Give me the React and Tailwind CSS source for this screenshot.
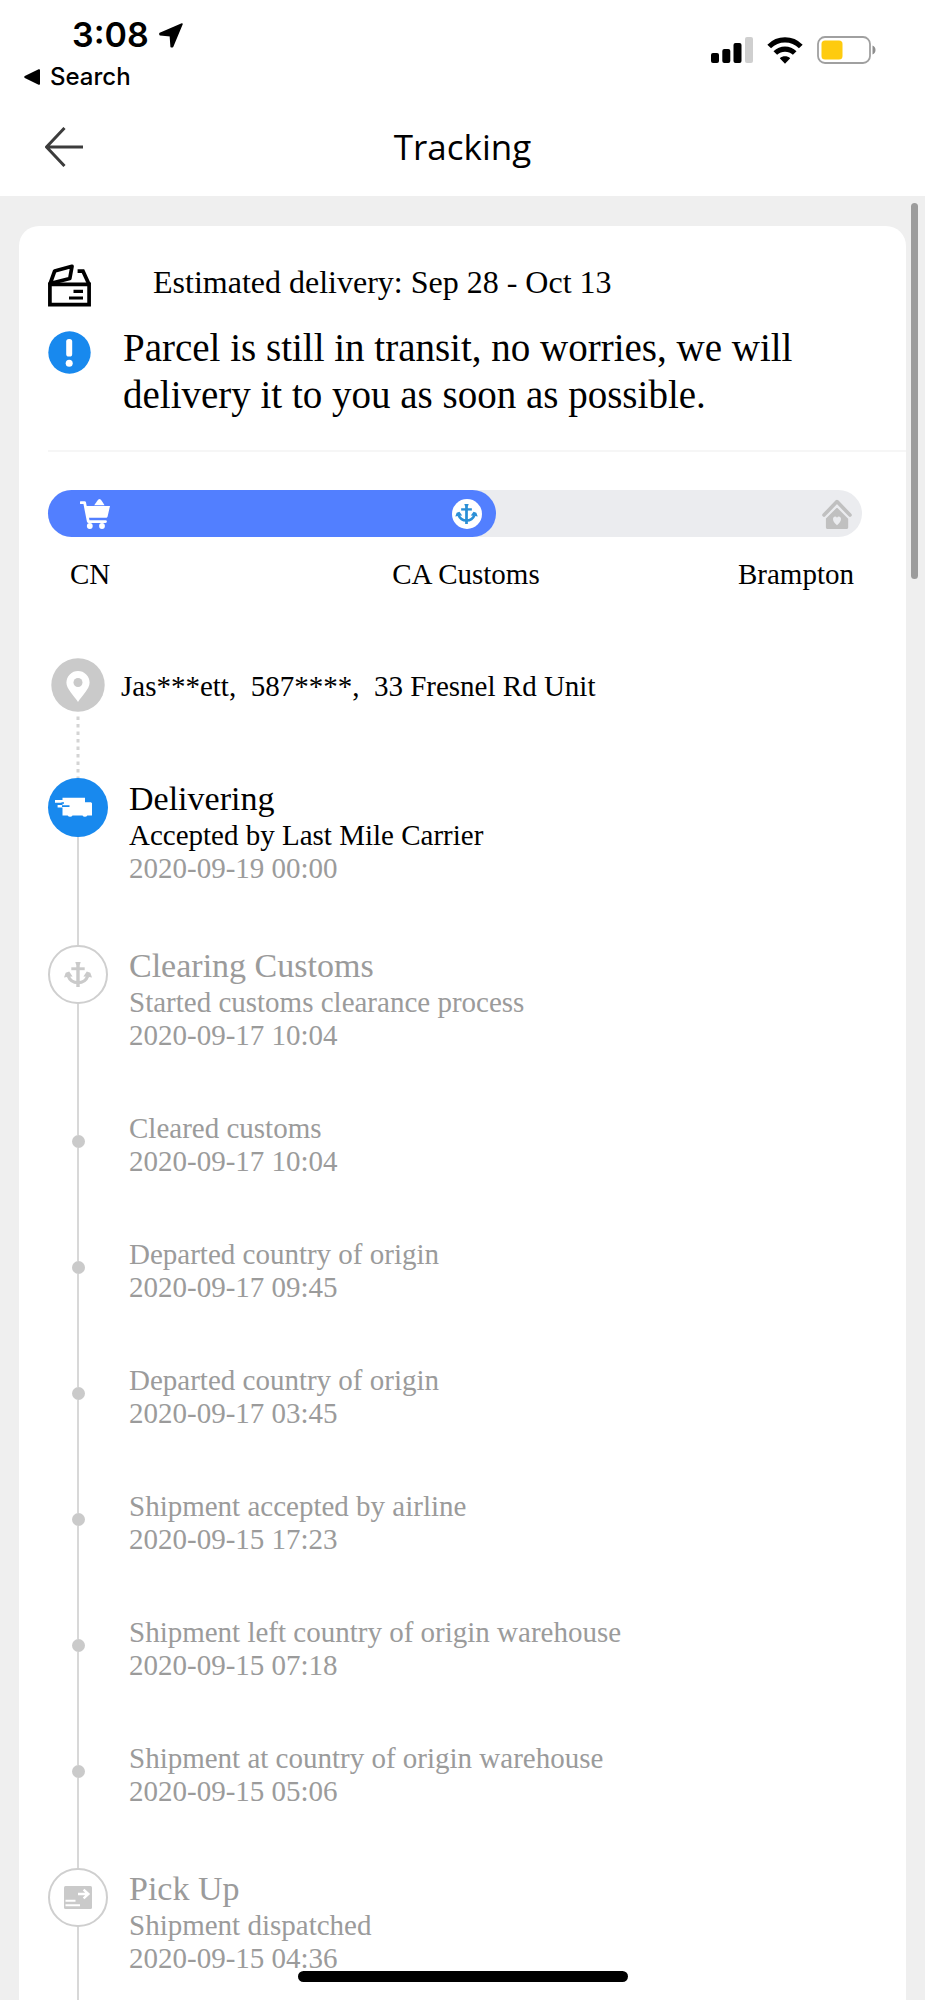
import clsx from "clsx";

const events = [
  { type: "delivering", title: "Delivering", text: "Accepted by Last Mile Carrier", date: "2020-09-19 00:00", active: true },
  { type: "customs", title: "Clearing Customs", text: "Started customs clearance process", date: "2020-09-17 10:04" },
  { type: "dot", text: "Cleared customs", date: "2020-09-17 10:04" },
  { type: "dot", text: "Departed country of origin", date: "2020-09-17 09:45" },
  { type: "dot", text: "Departed country of origin", date: "2020-09-17 03:45" },
  { type: "dot", text: "Shipment accepted by airline", date: "2020-09-15 17:23" },
  { type: "dot", text: "Shipment left country of origin warehouse", date: "2020-09-15 07:18" },
  { type: "dot", text: "Shipment at country of origin warehouse", date: "2020-09-15 05:06" },
  { type: "pickup", title: "Pick Up", text: "Shipment dispatched", date: "2020-09-15 04:36" },
];

function AnchorIcon({ className }) {
  return (
    <svg viewBox="0 0 28 25" className={className} fill="currentColor">
      <path d="M11.300 0h5.400l-1 3.200V25h-3.400V3.200z" />
      <path d="M7.300 5.300h13.400v2.900H7.300z" />
      <path d="M4.200 14C6 19 9.800 20.600 14 20.600S22 19 23.800 14" fill="none" stroke="currentColor" strokeWidth="3.200" />
      <path d="M0 15.600L1.700 10.800 5.200 9.600 8.600 14.400 4.500 14.800z" />
      <path d="M28 15.600L26.300 10.800 22.800 9.600 19.400 14.400 23.500 14.800z" />
    </svg>
  );
}

function CartIcon() {
  return (
    <svg viewBox="0 0 30 30" className="h-[30px] w-[30px]" fill="currentColor">
      <path d="M14.200 6.300L17 2.200C18 .8 18.800.1 19.500.1s1.500.7 2.500 2.100l2.500 4.100z" />
      <path d="M4.500 7H30L27.600 17.400c-.2.900-.8 1.300-1.700 1.300H7.500z" />
      <path d="M1 3.600H4.600L8.300 22.600H25.500" fill="none" stroke="currentColor" strokeWidth="2.800" strokeLinecap="round" strokeLinejoin="round" />
      <circle cx="9.800" cy="27" r="2.900" />
      <circle cx="22" cy="27" r="2.900" />
    </svg>
  );
}

function HouseIcon() {
  return (
    <svg viewBox="0 0 30 30" className="h-[30px] w-[30px]" fill="currentColor">
      <path d="M2 16L15 2.600 28 16" fill="none" stroke="currentColor" strokeWidth="3.600" strokeLinejoin="round" strokeLinecap="round" />
      <path d="M14 9.400c.6-.6 1.400-.6 2 0l10.200 10.300V28.200c0 1-.7 1.800-1.700 1.800H5.600c-1 0-1.700-.8-1.700-1.800V19.500z" />
      <path d="M15 26.200c-2.300-1.800-4-3.900-4-6.100 0-2.900 2.900-3.400 4-1.400 1.100-2 4-1.500 4 1.400 0 2.200-1.700 4.300-4 6.100z" className="fill-[#ebecef]" />
    </svg>
  );
}

function TruckIcon() {
  return (
    <svg viewBox="0 0 38 21" className="mr-2 h-[21px] w-[38px]" fill="currentColor">
      <path d="M7.500.700H30V5.300H36L37 6.300V18.500H32.300a2.600 2 0 0 1-4.800 0H17.500a2.600 2 0 0 1-4.800 0H7.500z" />
      <path d="M0 2.900h9v2.800H0zM2.600 8h6v2.600h-6z" />
      <path d="M6.500 5.300h2.500v1.500h-2.500zM7 8.300h7.500v1.600H7z" className="fill-[#1889ee]" />
    </svg>
  );
}

function PickupIcon() {
  return (
    <svg viewBox="0 0 28 23" className="h-[23px] w-[28px]">
      <rect width="28" height="23" rx="1.500" className="fill-[#cacaca]" />
      <path d="M14 8h9.500M19.600 3.600L24.400 8l-4.800 4.400" fill="none" stroke="white" strokeWidth="2.400" />
      <path d="M1.500 14.800h10M1.500 19.300h14.500" stroke="white" strokeWidth="1.900" />
    </svg>
  );
}

function BoxIcon() {
  return (
    <svg viewBox="0 0 43 43" className="h-[43px] w-[43px] shrink-0" fill="none" stroke="black" strokeWidth="3.700">
      <path d="M1.900 20.300H41.100V40.700H1.900z" />
      <path d="M2.200 19.500L6.700 7 24 2.300 21.800 14.500z" strokeLinejoin="round" />
      <path d="M29.600 7.200H35l6 13" />
      <path d="M25.500 27.300H35M21 34H35" strokeWidth="3.200" />
    </svg>
  );
}

function AlertIcon() {
  return (
    <svg viewBox="0 0 43 43" className="mt-[7px] h-[43px] w-[43px] shrink-0">
      <circle cx="21.500" cy="21.500" r="21.200" className="fill-[#1889ee]" />
      <rect x="18.200" y="8" width="6" height="17.500" rx="2.600" fill="white" />
      <circle cx="21.200" cy="32.200" r="3.500" fill="white" />
    </svg>
  );
}

function PinBadge() {
  return (
    <svg viewBox="0 0 54 54" className="h-[54px] w-[54px]">
      <circle cx="27" cy="27" r="26.700" className="fill-[#cacaca]" />
      <path d="M27 44C23 38 15.400 31 15.400 24.600a11.600 11.600 0 0 1 23.200 0C38.600 31 31 38 27 44z" fill="white" />
      <circle cx="27" cy="24.500" r="4.500" className="fill-[#cacaca]" />
    </svg>
  );
}

function StatusBar() {
  return (
    <div className="flex h-[98px] justify-between pl-6 pr-[49px] pt-[15px] font-['Inter',sans-serif] text-black">
      <div>
        <div className="flex items-center gap-[10px] pl-12 text-[34px] font-semibold leading-10">
          3:08
          <svg viewBox="0 0 24 25" className="h-[25px] w-6" fill="currentColor" stroke="currentColor" strokeWidth="1.600" strokeLinejoin="round">
            <path d="M23 1L13.500 23.800H12.200L11.400 12.800 1 11.600V10.400z" />
          </svg>
        </div>
        <a href="#search" className="mt-2 flex items-center gap-[10px] text-2xl font-medium leading-7">
          <svg viewBox="0 0 16 16" className="h-4 w-4" fill="currentColor">
            <path d="M14.600.300c.8-.4 1.400.1 1.400 1v13.400c0 .9-.6 1.400-1.400 1L.800 9C0 8.600 0 7.500.800 7z" />
          </svg>
          Search
        </a>
      </div>
      <div className="mt-[21px] flex h-7 items-center">
        <svg viewBox="0 0 42 26" className="mr-[14px] h-[26px] w-[42px]">
          <rect x="0" y="16" width="8" height="10" rx="2" />
          <rect x="11.300" y="12" width="8" height="14" rx="2" />
          <rect x="22.500" y="6" width="8" height="20" rx="2" />
          <rect x="34" y="0" width="8" height="26" rx="2" className="fill-[#cfcfcf]" />
        </svg>
        <svg viewBox="0 0 36 27" className="mr-[14px] h-[27px] w-9">
          <path d="M2.200 9.500C11 .600 25 .600 33.800 9.500M8.300 16c5.500-5.300 13.900-5.300 19.400 0" fill="none" stroke="black" strokeWidth="5.200" />
          <path d="M12.800 21.300c3-2.600 7.400-2.600 10.400 0L18 26.800z" />
        </svg>
        <svg viewBox="0 0 59 28" className="h-7 w-[59px]">
          <rect x="1" y="1" width="52" height="26" rx="7" fill="none" stroke="#a0a0a0" strokeWidth="1.800" />
          <rect x="4.500" y="4.500" width="21" height="19" rx="3.500" className="fill-[#fecb0f]" />
          <path d="M55.500 9.500c4 1.500 4 7.500 0 9z" className="fill-[#8e8e8e]" />
        </svg>
      </div>
    </div>
  );
}

function Progress() {
  return (
    <div className="mr-11 mt-[38px]">
      <div className="flex h-[47px] items-center justify-between rounded-full bg-[#ebecef]">
        <div className="flex h-full w-[55%] items-center justify-between rounded-full bg-[#527fff] pl-8 pr-[14px] text-white">
          <CartIcon />
          <span className="flex h-[30px] w-[30px] items-center justify-center rounded-full bg-white text-[#2a8fd6]">
            <AnchorIcon className="h-5 w-[23px]" />
          </span>
        </div>
        <span className="mr-[10px] text-[#c0c0c0]">
          <HouseIcon />
        </span>
      </div>
      <div className="mt-[21px] grid grid-cols-3 pl-[22px] pr-2 text-[29px] leading-[33px]">
        <span>CN</span>
        <span className="pl-2 text-center">CA Customs</span>
        <span className="text-right">Brampton</span>
      </div>
    </div>
  );
}

function Marker({ type }) {
  if (type === "dot") {
    return (
      <>
        <span className="h-[23px] w-[2px] bg-[#d8d8d8]" />
        <span className="h-[13px] w-[13px] rounded-full bg-[#cacaca]" />
      </>
    );
  }
  return (
    <span
      className={clsx(
        "flex h-[59px] w-[60px] items-center justify-center rounded-full",
        type === "delivering" ? "bg-[#1889ee] text-white" : "border-2 border-[#cfcfcf] text-[#cacaca]"
      )}
    >
      {type === "delivering" && <TruckIcon />}
      {type === "customs" && <AnchorIcon className="h-[25px] w-[28px]" />}
      {type === "pickup" && <PickupIcon />}
    </span>
  );
}

function Timeline() {
  return (
    <ol className="mt-[67px] flex flex-1 flex-col text-[29px] leading-[33px]">
      <li className="flex h-[120px] gap-[13px]">
        <div className="flex w-[60px] flex-col items-center">
          <PinBadge />
          <svg viewBox="0 0 4 66" className="h-[66px] w-1">
            <path d="M2 4.500v62" stroke="#d4d4d4" strokeWidth="3" strokeDasharray="3.500 4" />
          </svg>
        </div>
        <p className="whitespace-pre pt-3">{"Jas***ett,  587****,  33 Fresnel Rd Unit"}</p>
      </li>
      {events.map((e, i) => (
        <li key={i} className="flex gap-[21px] last:flex-1">
          <div className="flex w-[60px] flex-col items-center">
            <Marker type={e.type} />
            <span className="w-[2px] flex-1 bg-[#d8d8d8]" />
          </div>
          <div className={clsx(i < events.length - 1 && "pb-[60px]", e.active ? "text-black" : "text-[#9b9b9b]")}>
            {e.title && <h2 className="text-[34px] leading-[41px]">{e.title}</h2>}
            <p>{e.text}</p>
            <time className="block text-[#9b9b9b]">{e.date}</time>
          </div>
        </li>
      ))}
    </ol>
  );
}

export default function App() {
  return (
    <div className="flex min-h-screen flex-col bg-white font-['Liberation_Serif',serif] text-black">
      <StatusBar />
      <header className="grid h-[98px] grid-cols-[1fr_auto_1fr] items-center px-11">
        <button type="button" aria-label="Back" className="justify-self-start">
          <svg viewBox="0 0 40 40" className="h-10 w-10" fill="none" stroke="#3c3c3c" strokeWidth="3">
            <path d="M20.500 1L2.500 20l18 19M2.500 20H39" strokeLinejoin="round" />
          </svg>
        </button>
        <h1 className="font-['Open_Sans',sans-serif] text-[35px] leading-10">Tracking</h1>
      </header>

      <main className="relative flex flex-1 flex-col bg-[#efefef] px-[19px] pt-[30px]">
        <section className="flex flex-1 flex-col rounded-t-[20px] bg-white pl-[29px] pt-[38px]">
          <div className="flex gap-[62px]">
            <BoxIcon />
            <p className="text-[32px] leading-9">Estimated delivery: Sep 28 - Oct 13</p>
          </div>
          <div className="mt-[17px] flex gap-8 border-b-2 border-[#f6f6f6] pb-8">
            <AlertIcon />
            <p className="max-w-[700px] text-[39px] leading-[47px]">
              Parcel is still in transit, no worries, we will delivery it to you as soon as possible.
            </p>
          </div>
          <Progress />
          <Timeline />
        </section>
        {/* scroll thumb */}
        <div className="absolute right-[7px] top-[7px] h-[376px] w-[7px] rounded-full bg-[#9c9c9c]" />
      </main>

      {/* home indicator */}
      <div className="fixed bottom-[18px] left-1/2 h-[11px] w-[330px] -translate-x-1/2 rounded-full bg-black" />
    </div>
  );
}
